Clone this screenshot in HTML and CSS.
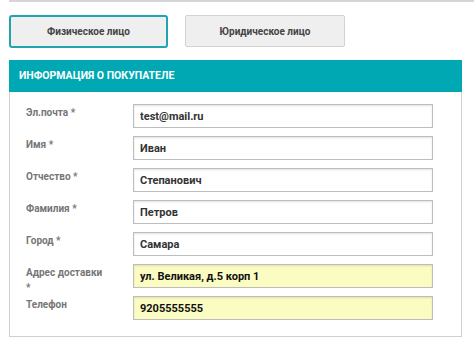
FILE: index.html
```
<!DOCTYPE html>
<html lang="ru">
<head>
  <meta charset="UTF-8" />
  <meta name="viewport" content="width=device-width, initial-scale=1.0"/>
  <title>Оформление заказа</title>
  <link rel="stylesheet" href="styles.css">
</head>
<body>
  <div class="page">
    <div class="topline"></div>

    <!-- Тип покупателя -->
    <div class="tabs">
      <button class="tab active">Физическое лицо</button>
      <button class="tab">Юридическое лицо</button>
    </div>

    <!-- Информация о покупателе -->
    <section class="panel">
      <h2 class="panel-title">Информация о покупателе</h2>
      <div class="panel-body">
        <div class="row">
          <label class="label">Эл.почта *</label>
          <input class="field" type="text" value="test@mail.ru">
        </div>
        <div class="row">
          <label class="label">Имя *</label>
          <input class="field" type="text" value="Иван">
        </div>
        <div class="row">
          <label class="label">Отчество *</label>
          <input class="field" type="text" value="Степанович">
        </div>
        <div class="row">
          <label class="label">Фамилия *</label>
          <input class="field" type="text" value="Петров">
        </div>
        <div class="row">
          <label class="label">Город *</label>
          <input class="field" type="text" value="Самара">
        </div>
        <div class="row">
          <label class="label">Адрес доставки *</label>
          <input class="field autofill" type="text" value="ул. Великая, д.5 корп 1">
        </div>
        <div class="row">
          <label class="label">Телефон</label>
          <input class="field autofill" type="text" value="9205555555">
        </div>
      </div>
    </section>
  </div>
</body>
</html>
```

FILE: styles.css
```
body {
  margin: 0;
  font-family: Roboto, "Liberation Sans", Arial, sans-serif;
  background-color: #fff;
  color: #333;
}

.page {
  padding-left: 9px;
}

.topline {
  border-top: 2px solid #d6d6d6;
}

.tabs {
  display: flex;
  gap: 17px;
  margin-top: 13px;
}

.tab {
  box-sizing: border-box;
  width: 160px;
  height: 32px;
  background-color: #efefef;
  border: 1px solid #d2d2d2;
  border-radius: 2px;
  font-family: inherit;
  font-size: 10px;
  font-weight: bold;
  color: #444;
  cursor: pointer;
}

.tab.active {
  width: 159px;
  height: 33px;
  border: 2px solid #21a4ad;
  border-radius: 3px;
}

.panel {
  box-sizing: border-box;
  width: 453px;
  margin-top: 12px;
  border: 1px solid #d0d0d0;
  border-top: none;
}

.panel-title {
  margin: 0 -1px;
  height: 32px;
  line-height: 32px;
  padding-left: 10px;
  background-color: #00a8b3;
  color: #fff;
  font-size: 10.5px;
  font-weight: bold;
  text-transform: uppercase;
}

.panel-body {
  padding: 12px 0 16px 16px;
}

.row {
  display: flex;
  align-items: flex-start;
  height: 24px;
  margin-bottom: 8px;
}

.row:last-child {
  margin-bottom: 0;
}

.label {
  flex: none;
  width: 82px;
  margin-right: 25px;
  padding-top: 1px;
  font-size: 10px;
  font-weight: bold;
  line-height: 15px;
  color: #767676;
}

.field {
  box-sizing: border-box;
  width: 300px;
  height: 24px;
  padding: 0 6px;
  border: 1px solid #bdbdbd;
  box-shadow: inset 0 1px 2px rgba(0, 0, 0, 0.12);
  background-color: #fff;
  font-family: inherit;
  font-size: 11px;
  font-weight: bold;
  color: #333;
}

.field.autofill {
  background-color: #fbfcc2;
  color: #111;
}
```
